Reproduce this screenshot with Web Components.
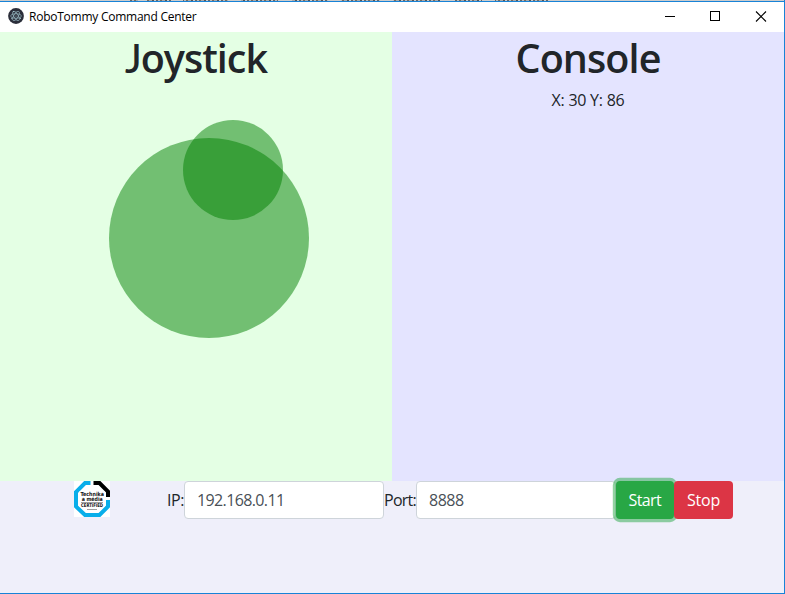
<!DOCTYPE html>
<html lang="en">
<head>
<meta charset="utf-8">
<title>RoboTommy Command Center</title>
<style>
html,body{margin:0;height:100%;overflow:hidden}
body{font-family:"Open Sans","Noto Sans",sans-serif;font-size:16px;line-height:24px;color:#212529}
</style>
</head>
<body>
<app-window></app-window>
<script>
const define = (name, html, init) => customElements.define(name, class extends HTMLElement {
  connectedCallback() {
    if (this.shadowRoot) return;
    const t = document.createElement('template');
    t.innerHTML = html;
    this.attachShadow({mode: 'open'}).append(t.content.cloneNode(true));
    if (init) init(this, this.shadowRoot);
  }
});

/* Text tracked so that its advance width equals the "w" attribute. */
define('fit-text', `<style>:host{display:inline-block;white-space:pre}span{display:inline-block}</style><span><slot></slot></span>`, (el, root) => {
  const w = +el.getAttribute('w'), s = root.querySelector('span');
  const n = el.textContent.length;
  const now = s.getBoundingClientRect().width;
  s.style.letterSpacing = ((w - now) / n) + 'px';
  el.style.width = w + 'px';
});

define('app-icon', `<style>:host{display:block;width:16px;height:16px}svg{display:block}</style>
<svg width="16" height="16" viewBox="0 0 16 16"><circle cx="8" cy="8" r="7.9" fill="#2b2e3a"/>
<g fill="none" stroke="#b5dde5" stroke-opacity=".75" stroke-width=".7"><ellipse cx="8" cy="8" rx="5.300" ry="2.200" transform="rotate(0 8 8)"/><ellipse cx="8" cy="8" rx="5.300" ry="2.200" transform="rotate(60 8 8)"/><ellipse cx="8" cy="8" rx="5.300" ry="2.200" transform="rotate(120 8 8)"/></g>
<g fill="#b5dde5" fill-opacity=".8"><circle cx="8" cy="8" r=".6"/><circle cx="5.4" cy="3.6" r=".6"/><circle cx="3.7" cy="10.6" r=".6"/><circle cx="12.4" cy="10.4" r=".6"/></g></svg>`);

define('title-bar', `<style>
:host{display:flex;align-items:center;height:30px;background:#fff;color:#000;font:12px/16px "Open Sans","Noto Sans",sans-serif;padding-left:8px}
app-icon{margin-right:5px;margin-top:-2px}fit-text{flex:1 0 auto;margin-top:-1px}
.spacer{flex:1}.controls{display:flex;height:30px}svg{display:block}
</style><app-icon></app-icon><fit-text w="167.500">RoboTommy Command Center</fit-text><span class="spacer"></span>
<div class="controls"><svg width="137" height="30" fill="none" stroke="#000" shape-rendering="crispEdges"><path d="M18 14.5h10M63.500 9.500h9v9h-9z"/><path d="M109 9.500l10 10M119 9.500l-10 10" shape-rendering="auto" stroke-width="1.100"/></svg></div>`);

define('app-panel', `<style>
:host{display:block;flex:1;text-align:center}
h1{margin:0;height:56px;font-size:39.500px;line-height:52px;font-weight:560}
</style><h1><slot name="title"></slot></h1><slot></slot>`);

define('joy-stick', `<style>
:host{display:block;width:200px;height:200px;margin:50px 0 0 109px;border-radius:50%;background:rgba(0,128,0,.5);position:relative}
i{position:absolute;left:74px;top:-18px;width:100px;height:100px;border-radius:50%;background:rgba(0,128,0,.5)}
</style><i></i>`);

define('cert-logo', `<style>:host{display:block;width:36px;height:36px;background:#fff}svg{display:block}text{font-family:"DejaVu Sans",sans-serif;font-weight:bold;fill:#111}</style>
<svg width="36" height="36" viewBox="0 0 36 36"><g fill="none" stroke-width="4"><path d="M16.500 2H11L2 11v14.500L11 34h14.500L34 25.500V19" stroke="#08aeea"/><path d="M19.500 2h6L34 10.500V16" stroke="#000"/></g>
<path d="M5 10.500h26v15h-26z" fill="#fff"/><g text-anchor="middle"><text x="18.200" y="15" font-size="5.600" textLength="23.500" lengthAdjust="spacingAndGlyphs">Technika</text><text x="18.200" y="20" font-size="5.600" textLength="21" lengthAdjust="spacingAndGlyphs">a média</text><text x="18" y="26" font-size="5" textLength="22" lengthAdjust="spacingAndGlyphs">CERTIFIED</text></g><path d="M7 21.500h22M13 28.500h10" stroke="#777" stroke-width=".7"/></svg>`);

define('text-field', `<style>
:host{display:block;box-sizing:border-box;width:200px;height:38px;padding:6px 12px;border:1px solid #ced4da;border-radius:4px;background:#fff;color:#495057}
</style><slot></slot>`);

define('push-button', `<style>
:host{display:block;box-sizing:border-box;height:38px;padding:7px 13px;border-radius:4px;color:#fff;background:#dc3545;position:relative}
:host([kind=start]){background:#28a745;box-shadow:0 0 0 3.200px rgba(40,167,69,.5)}
</style><slot></slot>`);

define('control-bar', `<style>
:host{display:flex;align-items:flex-start;height:112px;box-sizing:border-box;padding-left:74px;background:#efeffa}
cert-logo{margin-right:57px}label{padding-top:7px;display:block}
push-button+push-button{margin-right:-1px}
</style><cert-logo></cert-logo>
<label><fit-text w="17">IP:</fit-text></label><text-field><fit-text w="87.500">192.168.0.11</fit-text></text-field>
<label><fit-text w="32">Port:</fit-text></label><text-field style="width:199.500px"><fit-text w="34.500">8888</fit-text></text-field>
<push-button kind="start"><fit-text w="32.500">Start</fit-text></push-button><push-button><fit-text w="33">Stop</fit-text></push-button>`);

define('app-window', `<style>
:host{display:flex;flex-direction:column;box-sizing:border-box;width:785px;height:594px;border-right:1px solid #1883d7;border-bottom:1px solid #1883d7;overflow:hidden}
.edge{height:1px;background:linear-gradient(90deg,#ccc 130px,transparent 0 138px,#ccc 0 147px,transparent 0 171px,#ccc 0 183px,transparent 0 228px,#ccc 0 241px,transparent 0 278px,#ccc 0 292px,transparent 0 328px,#ccc 0 341px,transparent 0 380px,#ccc 0 393px,transparent 0 440px,#ccc 0 455px,transparent 0 482px,#ccc 0 495px,transparent 0 548px,#ccc 0),repeating-linear-gradient(90deg,#666 0 2px,#bbb 2px 4px,#776c60 4px 6px,#aaa 6px 9px,#555 9px 11px,#ccc 11px 13px)}
.edge+.line{height:1px;background:#1883d7}
.panels{display:flex;height:449px}
.l{background:#e4ffe4}.r{background:#e4e4ff}
.j{font-family:Lato,sans-serif;font-weight:500;line-height:0}
.read{display:block;height:24px}
</style><div class="edge"></div><div class="line"></div><title-bar></title-bar>
<div class="panels"><app-panel class="l"><fit-text slot="title" w="142"><span class="j">J</span>oystick</fit-text><joy-stick></joy-stick></app-panel>
<app-panel class="r"><fit-text slot="title" w="145">Console</fit-text><div class="read"><fit-text w="73">X: 30 Y: 86</fit-text></div></app-panel></div>
<control-bar></control-bar>`);
</script>
</body>
</html>
